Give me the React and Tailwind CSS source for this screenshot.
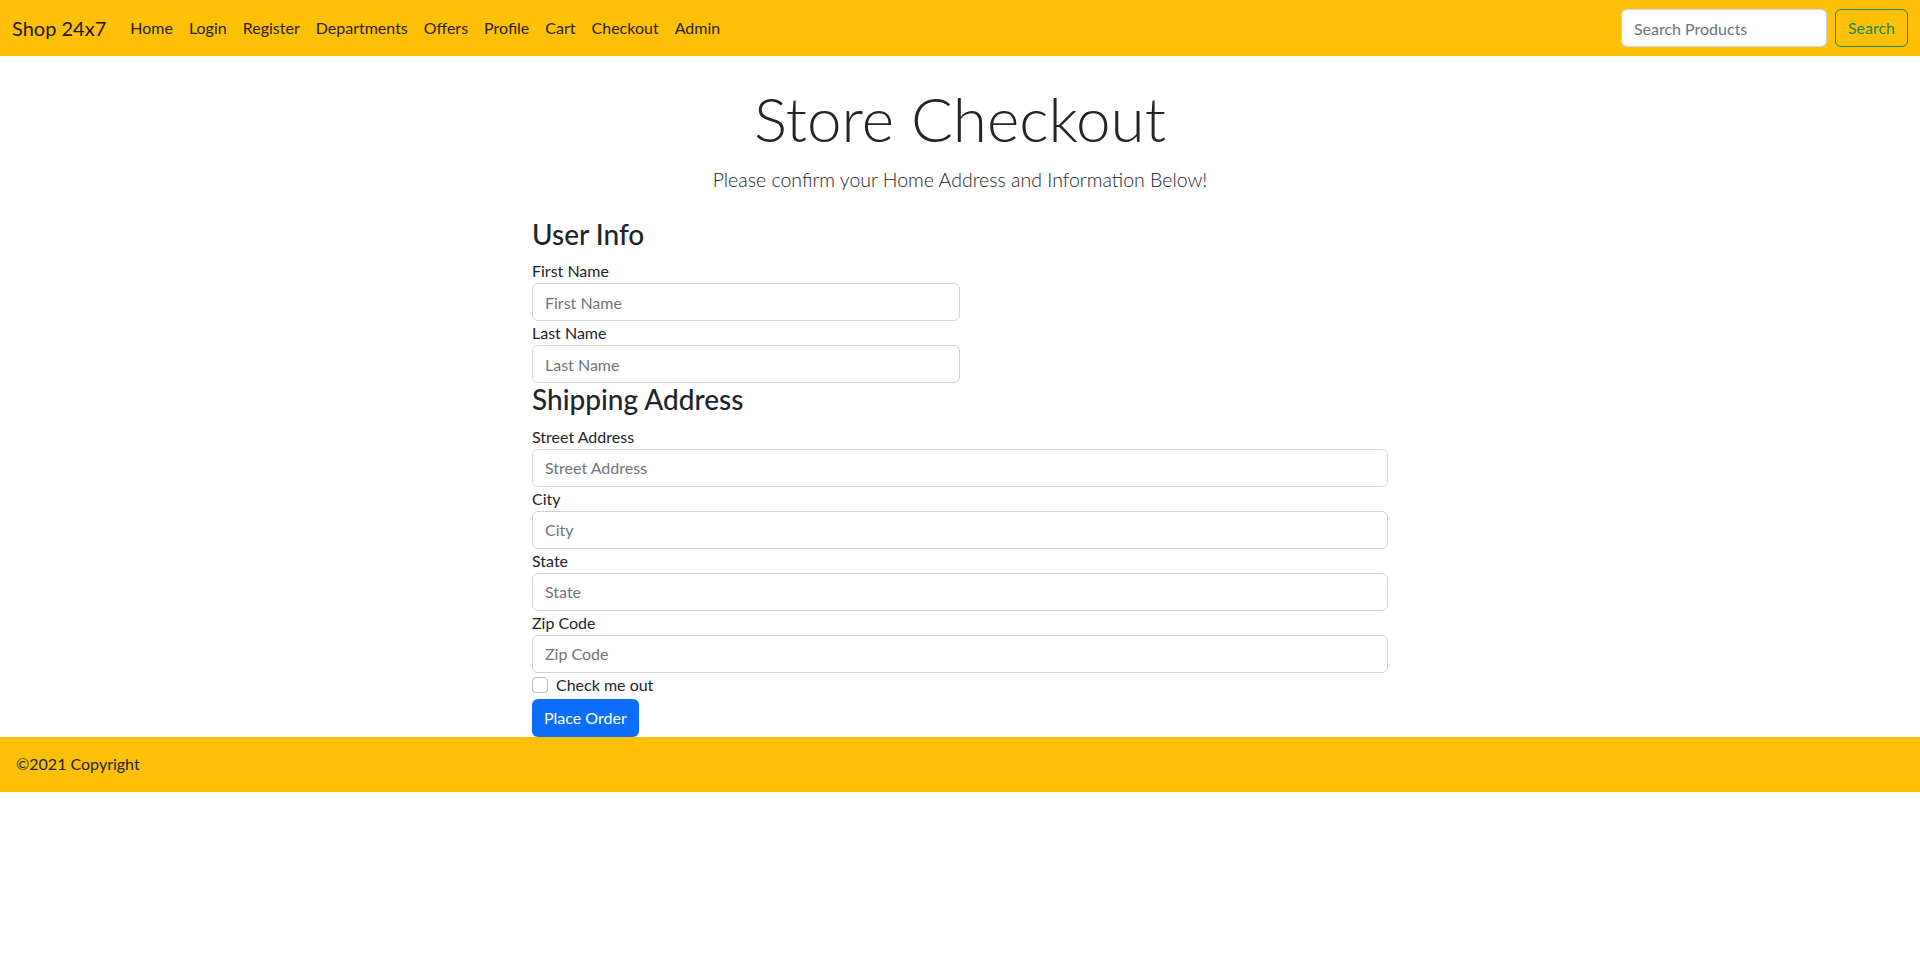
import React from 'react';

const navLinks = ['Home', 'Login', 'Register', 'Departments', 'Offers', 'Profile', 'Cart', 'Checkout', 'Admin'];

const Field = ({ label, wide }) => (
  <div className={wide ? 'w-full' : 'w-[428px]'}>
    <label className="block h-6 leading-6 text-base text-[#212529]">{label}</label>
    <input
      type="text"
      placeholder={label}
      className="block w-full h-[38px] px-3 text-base text-[#212529] bg-white border border-[#ced4da] rounded-md outline-none placeholder:text-[#6c757d]"
    />
  </div>
);

const App = () => {
  return (
    <div className="min-h-screen bg-white" style={{ fontFamily: 'Lato, "Open Sans", sans-serif' }}>
      <nav className="h-14 bg-[#ffc107] flex items-center justify-between px-3">
        <div className="flex items-center">
          <a className="text-xl leading-[30px] text-[#201800] mr-4">Shop 24x7</a>
          <div className="flex">
            {navLinks.map((l) => (
              <a key={l} className="px-2 text-base leading-6 text-[#2b2100]">{l}</a>
            ))}
          </div>
        </div>
        <div className="flex items-center gap-2">
          <input
            type="text"
            placeholder="Search Products"
            className="w-[206px] h-[38px] px-3 text-base bg-white border border-[#ced4da] rounded-md outline-none placeholder:text-[#6c757d]"
          />
          <button className="h-[38px] px-3 text-base text-[#198754] border border-[#198754] rounded-md">Search</button>
        </div>
      </nav>

      <main className="pt-6">
        <div className="text-center">
          <h1 className="text-[62px] leading-[76.8px] font-light text-[#212529] mb-2">Store Checkout</h1>
          <p className="text-[19.5px] leading-[30px] font-light text-[#212529]">Please confirm your Home Address and Information Below!</p>
        </div>

        <form className="w-[856px] mx-auto mt-[23px]">
          <h3 className="text-[28px] leading-[33.6px] font-medium text-[#212529] mb-2">User Info</h3>
          <Field label="First Name" />
          <Field label="Last Name" />
          <h3 className="text-[28px] leading-[33.6px] font-medium text-[#212529] mb-2">Shipping Address</h3>
          <Field label="Street Address" wide />
          <Field label="City" wide />
          <Field label="State" wide />
          <Field label="Zip Code" wide />
          <div className="flex items-start h-6 mb-0.5">
            <input type="checkbox" className="appearance-none w-4 h-4 mt-1 border border-[#bfbfbf] rounded bg-white" />
            <label className="ml-2 text-base leading-6 text-[#212529]">Check me out</label>
          </div>
          <button type="button" className="h-[38px] px-3 text-base text-white bg-[#0d6efd] rounded-md">Place Order</button>
        </form>
      </main>

      <footer className="h-[55px] bg-[#ffc107] flex items-center px-4">
        <span className="text-base text-[#212529]">©2021 Copyright</span>
      </footer>
    </div>
  );
};

export default App;
